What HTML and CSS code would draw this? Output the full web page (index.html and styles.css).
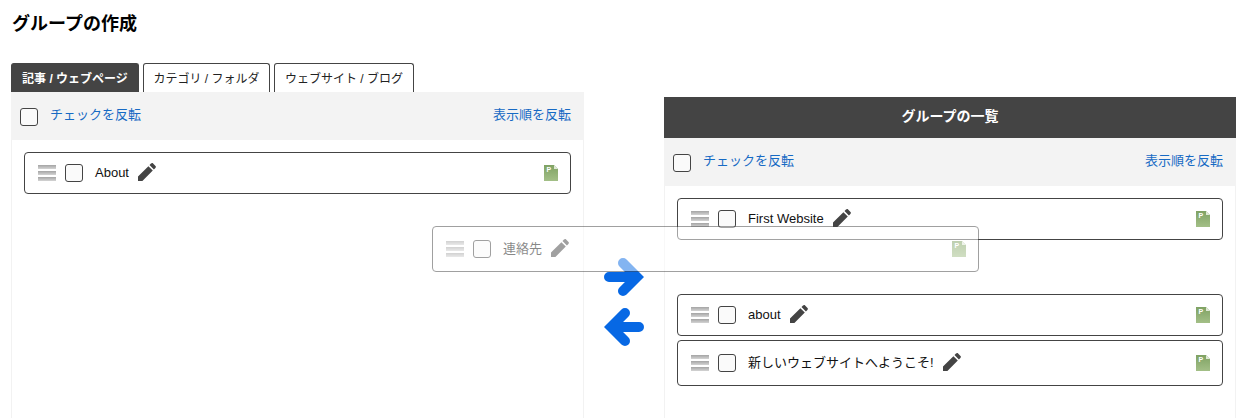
FILE: index.html
```html
<!DOCTYPE html>
<html lang="ja">
<head>
<meta charset="utf-8">
<title>グループの作成</title>
<link rel="stylesheet" href="styles.css">
</head>
<body>
<svg class="defs" width="0" height="0" aria-hidden="true">
  <defs>
    <linearGradient id="docfill" x1="0" y1="0" x2="0" y2="1">
      <stop offset="0" stop-color="#7fa263"/>
      <stop offset="1" stop-color="#a3bf87"/>
    </linearGradient>
    <symbol id="pencil" viewBox="0 0 18 18">
      <path d="M0 18V13.6L10.4 3.2 14.8 7.6 4.4 18Z M11.5 2.1 13 .6C13.7-.1 14.5-.1 15.1.5L17.5 2.9C18.1 3.5 18.1 4.3 17.4 5L15.9 6.5Z" fill="#444"/>
    </symbol>
    <symbol id="doc" viewBox="0 0 14 16">
      <path d="M0 0H10L14 4V16H0Z" fill="url(#docfill)"/>
      <path d="M10 0L14 4H10Z" fill="#dfe8d6"/>
      <text x="2.5" y="6.6" font-family="Liberation Sans, sans-serif" font-size="7" font-weight="700" fill="#fff">P</text>
    </symbol>
    <symbol id="arrow" viewBox="0 0 40 38">
      <path d="M5 19H33M19 5 33 19 19 33" fill="none" stroke="#0768e4" stroke-width="10" stroke-linecap="round" stroke-linejoin="miter"/>
    </symbol>
  </defs>
</svg>

<h1 class="page-title">グループの作成</h1>

<main class="layout">
  <section class="column">
    <nav class="tabs">
      <a class="tab tab-active">記事 / ウェブページ</a>
      <a class="tab">カテゴリ / フォルダ</a>
      <a class="tab">ウェブサイト / ブログ</a>
    </nav>
    <div class="toolbar">
      <span class="check toolbar-check"></span>
      <a class="link">チェックを反転</a>
      <a class="link link-end">表示順を反転</a>
    </div>
    <div class="list">
      <div class="item">
        <span class="handle"><i></i><i></i><i></i></span>
        <span class="check"></span>
        <span class="name">About</span>
        <svg class="pencil"><use href="#pencil"/></svg>
        <svg class="doc"><use href="#doc"/></svg>
      </div>
    </div>
  </section>

  <div class="arrows">
    <svg class="arrow"><use href="#arrow"/></svg>
    <svg class="arrow arrow-left"><use href="#arrow"/></svg>
  </div>

  <section class="column column-right">
    <h2 class="panel-title">グループの一覧</h2>
    <div class="toolbar">
      <span class="check toolbar-check"></span>
      <a class="link">チェックを反転</a>
      <a class="link link-end">表示順を反転</a>
    </div>
    <div class="list">
      <div class="item">
        <span class="handle"><i></i><i></i><i></i></span>
        <span class="check"></span>
        <span class="name">First Website</span>
        <svg class="pencil"><use href="#pencil"/></svg>
        <svg class="doc"><use href="#doc"/></svg>
      </div>
      <div class="placeholder"></div>
      <div class="item">
        <span class="handle"><i></i><i></i><i></i></span>
        <span class="check"></span>
        <span class="name">about</span>
        <svg class="pencil"><use href="#pencil"/></svg>
        <svg class="doc"><use href="#doc"/></svg>
      </div>
      <div class="item item-tall">
        <span class="handle"><i></i><i></i><i></i></span>
        <span class="check"></span>
        <span class="name">新しいウェブサイトへようこそ!</span>
        <svg class="pencil"><use href="#pencil"/></svg>
        <svg class="doc"><use href="#doc"/></svg>
      </div>
    </div>
  </section>
</main>

<div class="item item-tall ghost">
  <span class="handle"><i></i><i></i><i></i></span>
  <span class="check"></span>
  <span class="name">連絡先</span>
  <svg class="pencil"><use href="#pencil"/></svg>
  <svg class="doc"><use href="#doc"/></svg>
</div>
</body>
</html>
```

FILE: styles.css
```css
* { box-sizing: border-box; }

html, body {
  height: 418px;
  margin: 0;
  overflow: hidden;
  background: #fff;
}

body {
  position: relative;
  padding: 12px 11px 0;
  color: #000;
  font-family: "Liberation Sans", "Noto Sans CJK JP", sans-serif;
  font-size: 13px;
}

.defs { position: absolute; }

.page-title {
  margin: 0 0 0 1px;
  height: 39px;
  font-size: 18px;
  line-height: 24px;
  font-weight: 700;
}

.layout {
  display: flex;
  height: 355px;
  margin-top: 12px;
  width: 1225px;
}

.column {
  width: 573px;
  flex: none;
  display: flex;
  flex-direction: column;
}

.column-right { margin-top: 34px; width: 572px; }

.tabs {
  display: flex;
  gap: 4px;
  height: 29px;
}

.tab {
  display: flex;
  align-items: center;
  justify-content: center;
  height: 29px;
  width: 127px;
  padding-bottom: 2px;
  border: 1px solid #444;
  border-bottom: 0;
  border-radius: 3px 3px 0 0;
  background: #fff;
  font-size: 12px;
  color: #222;
}

.tab:nth-child(3) { width: 140px; }

.tab-active {
  width: 128px;
  background: #444;
  color: #fff;
  font-weight: 700;
}

.toolbar {
  display: flex;
  align-items: flex-start;
  flex: none;
  height: 48px;
  padding: 16px 13px 0 9px;
  background: #f3f3f3;
}

.toolbar-check { margin-right: 12px; }

.link {
  margin-top: -3px;
  color: #176ac4;
  font-size: 13px;
  line-height: 20px;
}

.link-end { margin-left: auto; }

.panel-title {
  margin: 0;
  flex: none;
  height: 41px;
  background: #444;
  color: #fff;
  font-size: 14px;
  font-weight: 700;
  line-height: 39px;
  text-align: center;
}

.list {
  display: flex;
  flex-direction: column;
  flex: 1;
  gap: 4px;
  padding: 12px 12px 0;
  border: 1px solid #f2f2f2;
  border-top: 0;
  border-bottom: 0;
}

.item {
  display: flex;
  align-items: center;
  flex: none;
  height: 42px;
  padding: 0 12px 0 13px;
  border: 1px solid #444;
  border-radius: 4px;
  background: #fff;
}

.item-tall { height: 46px; }

.placeholder { height: 46px; flex: none; }

.handle {
  display: flex;
  flex-direction: column;
  gap: 2px;
  width: 18px;
  margin-right: 9px;
}

.handle i {
  display: block;
  height: 4px;
  background: linear-gradient(#a4a4a4, #d4d4d4);
}

.check {
  flex: none;
  width: 18px;
  height: 18px;
  border: 1px solid #444;
  border-radius: 3px;
  background: #fafafa;
}

.name {
  margin: -2px 0 0 12px;
  color: #111;
}

.item-tall .name { margin-top: -4px; }

.pencil {
  width: 18px;
  height: 18px;
  margin: -2px 0 0 9px;
  flex: none;
}

.doc {
  width: 14px;
  height: 16px;
  margin-left: auto;
  flex: none;
}

.arrows {
  flex: none;
  width: 80px;
  padding: 195px 20px 0;
  display: flex;
  flex-direction: column;
  gap: 12px;
}

.arrow {
  display: block;
  width: 40px;
  height: 38px;
}

.arrow-left { transform: scaleX(-1); }

.ghost {
  position: absolute;
  left: 432px;
  top: 226px;
  width: 547px;
  opacity: 0.5;
}
```
